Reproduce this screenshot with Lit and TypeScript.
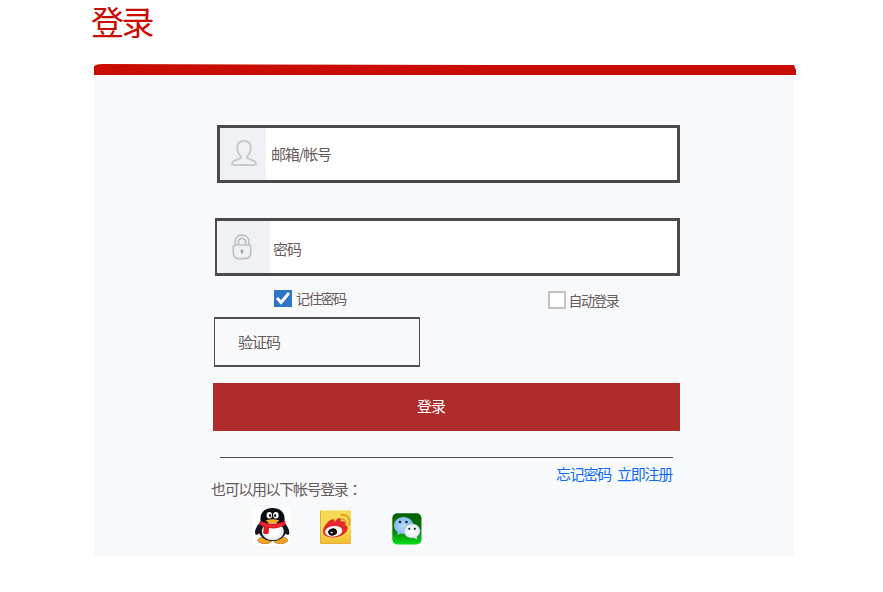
import { LitElement, html, css } from "lit";
import { customElement } from "lit/decorators.js";

const userIcon = html`<svg class="user" width="28" height="28" viewBox="0 0 28 28" fill="none" stroke="#c9cacc" stroke-width="1.9" stroke-linejoin="round">
  <path d="M14 2C9.400 2 7.200 4.800 7.200 9C7.200 12.500 8.800 15.500 11 17.500V19C9 20.800 2.200 20.800 2 24.500Q2 26 3.500 26H24.500Q26 26 26 24.500C25.800 20.800 19 20.800 17 19V17.500C19.200 15.500 20.800 12.500 20.800 9C20.800 4.800 18.600 2 14 2Z"/>
</svg>`;

const lockIcon = html`<svg width="20" height="26" viewBox="0 0 20 26" fill="none" stroke="#bfc0c3" stroke-width="1.700">
  <path d="M3.200 11V7.500C3.200 3.600 6 1.200 10 1.200S16.800 3.600 16.800 7.500V11M6.500 11V7.800C6.500 5.600 7.800 4.300 10 4.300S13.500 5.600 13.500 7.800V11"/>
  <path d="M3.500 11H16.500Q18.700 11 18.700 13.200V18.500C18.700 22.500 16.500 24.700 12.500 24.700H7.500C3.500 24.700 1.300 22.500 1.300 18.500V13.200Q1.300 11 3.500 11Z"/>
  <path d="M10 15.300a1.700 1.800 0 0 1 .8 3.300v1.500h-1.600v-1.500a1.700 1.800 0 0 1 .8-3.300Z" fill="#a4a5a9" stroke="none"/>
</svg>`;

const qqLogo = html`<svg width="40" height="37" viewBox="0 0 40 37">
  <defs>
    <radialGradient id="belly"><stop offset=".5" stop-color="#fff"/><stop offset="1" stop-color="#dfe3e8"/></radialGradient>
  </defs>
  <rect width="37" height="37" x="1" fill="#fff"/>
  <ellipse cx="13" cy="32.300" rx="7.200" ry="3.300" fill="#f6a51c" stroke="#a85b08" stroke-width=".6"/>
  <ellipse cx="28.500" cy="32.300" rx="7.200" ry="3.300" fill="#f6a51c" stroke="#a85b08" stroke-width=".6"/>
  <path d="M9 14C5 17 2.300 22 3.300 26C4.500 28 7 26 8 24L32 24C33 26 36 28 37.200 26C38 22 35 17 31.500 14Z" fill="#11161e"/>
  <ellipse cx="20.500" cy="21.500" rx="14" ry="11.500" fill="#11161e"/>
  <path d="M8.500 14C7.500 5 12 0 20.500 0S33.500 5 32.500 14C29 17 12 17 8.500 14Z" fill="#090c12"/>
  <ellipse cx="20.800" cy="23.300" rx="11" ry="9" fill="url(#belly)"/>
  <path d="M8 12.500C15 16.700 26 16.700 33 12.500L34 16.500C27 20.700 21 20.800 17 20L16.700 25.500C14.500 26.500 12 26 11.200 25L11.800 18.900C10.500 18.400 8.500 17.400 7.300 16.500Z" fill="#df1920"/>
  <path d="M10 15.500C16 19.200 26 19.200 32 15.200" fill="none" stroke="#f4514b" stroke-width=".7"/>
  <ellipse cx="17.300" cy="7.300" rx="2.700" ry="3.300" fill="#fff"/>
  <ellipse cx="23.900" cy="7.300" rx="2.700" ry="3.300" fill="#fff"/>
  <ellipse cx="18" cy="7.500" rx="1.100" ry="1.600" fill="#111"/>
  <ellipse cx="23.200" cy="7.500" rx="1.100" ry="1.600" fill="#111"/>
  <path d="M13.500 12.500Q20.500 9.800 27.500 12.500Q24.500 15.600 20.500 15.600T13.500 12.500Z" fill="#f7ad20"/>
</svg>`;

const weiboLogo = html`<svg width="32" height="35" viewBox="0 0 32 35">
  <defs>
    <linearGradient id="sun" x2="0" y2="1"><stop stop-color="#f2d94f"/><stop offset=".5" stop-color="#f7de55"/><stop offset="1" stop-color="#f0bd35"/></linearGradient>
  </defs>
  <path d="M0 0.500H31V34H0Z" fill="url(#sun)"/>
  <path d="M.5 1V33.500H30.500" fill="none" stroke="#e4ae36"/>
  <path d="M3 21.500C3 16.500 8 11 11.500 9.500C14 8.500 15 9.800 14.300 12.200C16.500 10.500 17 8 19.300 8C21.500 8.300 20.800 10 20.800 11.500C24 10.500 26 11.500 25 14.800C28 16 28.500 19 26.500 21.600C23.500 25.400 18 27.700 12.500 27.500C7 27.300 3 25 3 21.500Z" fill="#e32a28"/>
  <ellipse cx="13.700" cy="21.300" rx="8.700" ry="5.300" transform="rotate(-7 13.700 21.300)" fill="#fff"/>
  <ellipse cx="12.600" cy="22" rx="4.500" ry="3.500" transform="rotate(-14 12.600 22)" fill="#080808"/>
  <ellipse cx="11.600" cy="22.600" rx="1.200" ry=".9" fill="#fff"/>
  <path d="M21.500 9C24.500 8.700 26.500 11 25.700 13.800M21 5C27.500 4.200 31 9.500 29 15.300" fill="none" stroke="#e79725" stroke-width="1.600" stroke-linecap="round"/>
</svg>`;

const wechatLogo = html`<svg width="30" height="32" viewBox="0 0 30 32">
  <defs>
    <linearGradient id="leaf" x2="0" y2="1"><stop stop-color="#045f08"/><stop offset=".55" stop-color="#067c0a"/><stop offset="1" stop-color="#08e01a"/></linearGradient>
    <radialGradient id="sky"><stop stop-color="#b9dbfa"/><stop offset="1" stop-color="#88b8ea"/></radialGradient>
    <radialGradient id="cloud"><stop stop-color="#fff"/><stop offset="1" stop-color="#dde8f2"/></radialGradient>
  </defs>
  <rect x=".3" y=".3" width="29.200" height="31.200" rx="5" fill="url(#leaf)"/>
  <path d="M11.500 4C6 4 2 7.800 2 12.500C2 15.500 3.500 17.800 5.700 19.300L5.200 22.300L8.600 20.600C15 22.200 21.500 18.300 21.500 12.500C21.500 7.800 17 4 11.500 4Z" fill="url(#sky)"/>
  <path d="M20 10.800C15.500 10.800 12 14 12 18C12 22.500 16.500 26 22 24.900L25.300 26.500L24.800 23.800C26.800 22.500 28.200 20.500 28.200 18C28.200 14 24.500 10.800 20 10.800Z" fill="url(#cloud)" stroke="#65859b" stroke-width=".4"/>
  <circle cx="8" cy="9" r="1.300" fill="#102a34"/><circle cx="14.500" cy="9" r="1.300" fill="#102a34"/>
  <circle cx="17.300" cy="15.800" r="1.100" fill="#102a34"/><circle cx="22.800" cy="15.800" r="1.100" fill="#102a34"/>
</svg>`;

@customElement("app-root")
export class AppRoot extends LitElement {
  static styles = css`
    :host {
      display: block;
      height: 592px;
      background: #fff;
      color: #675b5b;
      font: 15px/20px "Noto Sans CJK SC", sans-serif;
      letter-spacing: -1px;
    }
    * { box-sizing: border-box; }
    svg { display: block; flex: none; }
    h1 {
      height: 64px;
      margin: 0;
      padding: 0 0 0 91px;
      color: #c90c04;
      font-size: 33px;
      font-weight: 400;
      line-height: 43px;
      letter-spacing: -2.500px;
    }
    .bar { margin-left: 94px; }
    .panel {
      display: flex;
      flex-direction: column;
      width: 700px;
      height: 481px;
      margin-left: 94px;
      padding: 50px 114px 0 119px;
      background: #f8f9fb;
    }
    .field {
      display: flex;
      align-items: stretch;
      height: 58px;
      border: 3px solid #4a4a4c;
      background: #fff;
    }
    .account { margin-left: 4px; letter-spacing: -1.200px; }
    .password { margin: 35px 0 0 2px; border-left-width: 2px; }
    .badge {
      display: flex;
      align-items: center;
      justify-content: center;
      width: 46px;
      margin-right: 5px;
      padding: 0 0 2px 2px;
      background: #f0f1f5;
    }
    .password .badge { width: 53px; margin-right: 3px; padding: 0 3px 0 0; }
    .hint { align-self: center; }
    .password .hint { padding-top: 4px; }
    .checks { display: flex; height: 41px; padding: 12px 0 0 61px; letter-spacing: -1.600px; font-size: 14px; }
    .check { display: flex; align-items: center; height: 20px; gap: 4px; }
    .check.auto { margin: 2px 0 0 202px; gap: 3px; }
    .empty { width: 18px; height: 18px; border: 2px solid #c1c2c4; border-radius: 1px; background: #fff; }
    .captcha {
      display: flex;
      align-items: center;
      width: 206px;
      height: 50px;
      margin-left: 1px;
      padding-left: 23px;
      border: solid #4f4f51;
      border-width: 2px 1.500px;
    }
    button {
      height: 48px;
      margin: 16px 0 0;
      padding: 0 31px 2px 0;
      border: 0;
      background: #ae2c2c;
      color: #fff;
      font: inherit;
      letter-spacing: inherit;
    }
    hr { width: 453px; height: 1px; margin: 26px 0 0 7px; border: 0; background: #4f4f51; }
    .links { display: flex; justify-content: flex-end; gap: 6px; height: 21px; padding: 6px 8px 0 0; letter-spacing: -1.250px; }
    .links a { color: #0e6bf5; text-decoration: none; }
    .other { margin-left: -2px; letter-spacing: -1.350px; }
    .colon { font-family: "Noto Sans CJK TC", sans-serif; }
    .logos { display: flex; align-items: flex-start; padding: 9px 0 0 39px; }
    .weibo { margin: 2px 0 0 28px; }
    .wechat { margin: 5px 0 0 40px; }
  `;

  render() {
    return html`
      <h1>登录</h1>
      <svg class="bar" width="702" height="11" viewBox="0 0 702 11">
        <path d="M0 11V2Q3 0 8 0L400 1H700L702 6V11Z" fill="#c90c04"/>
      </svg>
      <section class="panel">
        <div class="field account"><span class="badge">${userIcon}</span><span class="hint">邮箱/帐号</span></div>
        <div class="field password"><span class="badge">${lockIcon}</span><span class="hint">密码</span></div>
        <div class="checks">
          <label class="check">
            <svg width="18" height="17" viewBox="0 0 18 17"><path d="M0 0H18V17H0Z" fill="#2d75c5"/><path d="M3 8L7 12.500L15 3" fill="none" stroke="#fff" stroke-width="2.900"/></svg>
            <span>记住密码</span>
          </label>
          <label class="check auto"><i class="empty"></i><span>自动登录</span></label>
        </div>
        <div class="captcha">验证码</div>
        <button>登录</button>
        <hr />
        <nav class="links"><a>忘记密码</a><a>立即注册</a></nav>
        <div class="other">也可以用以下帐号登录<span class="colon">：</span></div>
        <div class="logos">
          <span>${qqLogo}</span><span class="weibo">${weiboLogo}</span><span class="wechat">${wechatLogo}</span>
        </div>
      </section>
    `;
  }
}
